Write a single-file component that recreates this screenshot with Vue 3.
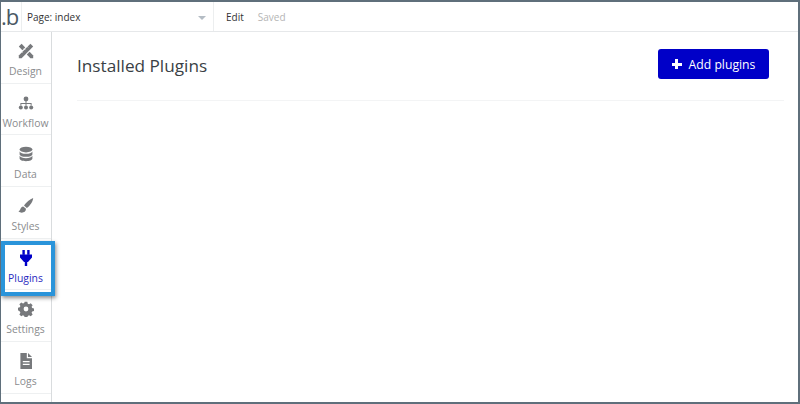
<script setup>
const items = [
  { key: 'design', label: 'Design' },
  { key: 'workflow', label: 'Workflow' },
  { key: 'data', label: 'Data' },
  { key: 'styles', label: 'Styles' },
  { key: 'plugins', label: 'Plugins' },
  { key: 'settings', label: 'Settings' },
  { key: 'logs', label: 'Logs' },
]
</script>

<template>
  <div class="frame">
    <header class="topbar">
      <div class="logo">.b</div>
      <div class="page">
        <span>Page: index</span>
        <i class="caret"></i>
      </div>
      <div class="actions">
        <span class="edit">Edit</span>
        <span class="saved">Saved</span>
      </div>
    </header>
    <div class="body">
      <nav class="side">
        <div v-for="it in items" :key="it.key" class="item" :class="{ active: it.key === 'plugins' }">
          <svg class="ico" viewBox="0 0 20 20" aria-hidden="true">
            <g v-if="it.key === 'design'" fill="currentColor">
              <path d="M1 4.500 4.500 1 9 5.500 5.500 9Z" />
              <path d="M11 14.500 14.500 11 19 15.500V19h-3.500Z" />
              <path d="M1 15.500 15.500 1 19 4.500 4.500 19H1Z" />
              <path d="M4 10.500 5.500 12M7.500 7 9 8.500M11 4 12.500 5.500" stroke="#fff" stroke-width="1" />
            </g>
            <g v-else-if="it.key === 'workflow'" fill="currentColor">
              <circle cx="10" cy="5" r="3" />
              <circle cx="3.500" cy="15.500" r="2.500" />
              <circle cx="10" cy="15.500" r="2.500" />
              <circle cx="16.500" cy="15.500" r="2.500" />
              <path d="M9.400 7h1.200v3h6.400v3h-1.200v-1.800h-5.200V13H9.400v-1.800H4.200V13H3v-3h6.400Z" />
            </g>
            <g v-else-if="it.key === 'data'" fill="currentColor">
              <ellipse cx="10" cy="4.500" rx="8" ry="3.500" />
              <path d="M2 6.800c1 2 4 3 8 3s7-1 8-3v3.400c0 1.900-3.500 3.300-8 3.300s-8-1.400-8-3.300Z" />
              <path d="M2 12.300c1 2 4 3 8 3s7-1 8-3v3.400c0 1.900-3.500 3.300-8 3.300s-8-1.400-8-3.300Z" />
            </g>
            <g v-else-if="it.key === 'styles'" fill="currentColor">
              <path d="M19 0c-4 1.500-9 5.500-11.500 9.500l3.500 3C14.500 10 18.500 5 19 0Z" />
              <path d="M6.500 10.500c-3.500.3-3 4.500-6 6.500 3.500 2.500 9.500 1.500 9.500-3.500Z" />
            </g>
            <g v-else-if="it.key === 'plugins'" fill="currentColor">
              <rect x="5.500" y="0" width="3" height="6" />
              <rect x="11.500" y="0" width="3" height="6" />
              <path d="M2.500 5.500h15v4l-5 5.500h-1V20h-3v-5h-1l-5-5.500Z" />
            </g>
            <g v-else-if="it.key === 'settings'" fill="currentColor">
              <path fill-rule="evenodd" d="M8.300 1h3.400l.5 2.400 1.600.7 2.100-1.300 2.400 2.400-1.300 2.100.7 1.600 2.400.5v3.200l-2.400.5-.7 1.600 1.300 2.100-2.400 2.400-2.100-1.300-1.600.7-.5 2.400H8.300l-.5-2.400-1.600-.7-2.100 1.300-2.400-2.400 1.300-2.100-.7-1.600L0 11.600V8.400l2.300-.5.7-1.600-1.300-2.100 2.400-2.400 2.100 1.300 1.600-.7ZM10 7a3 3 0 1 0 0 6 3 3 0 0 0 0-6Z" />
            </g>
            <g v-else fill="currentColor">
              <path fill-rule="evenodd" d="M3 0h8v6.500h6.500V20H3ZM6 10v1.500h8.500V10Zm0 3.500V15h8.500v-1.500Z" />
              <path d="M12.500 0 17.500 5H12.500Z" />
            </g>
          </svg>
          <span class="lbl">{{ it.label }}</span>
        </div>
        <div class="hl"></div>
      </nav>
      <main class="main">
        <div class="head">
          <h1>Installed Plugins</h1>
          <button class="add"><span class="plus"></span>Add plugins</button>
        </div>
      </main>
    </div>
  </div>
</template>

<style>
html, body { margin: 0; background: #fff; }
</style>

<style scoped>
.frame {
  width: 800px;
  height: 404px;
  box-sizing: border-box;
  border: 2px solid #5f6f7b;
  border-top-width: 2px;
  border-left-width: 1px;
  display: flex;
  flex-direction: column;
  font-family: "Open Sans", sans-serif;
  overflow: hidden;
  background: #fff;
}
.topbar {
  height: 29px;
  flex: none;
  display: flex;
  align-items: stretch;
  border-bottom: 1px solid #e6e8ea;
}
.logo {
  width: 20px;
  flex: none;
  border-right: 1px solid #eceeef;
  font-size: 22px;
  font-weight: 400;
  line-height: 29px;
  color: #4a5864;
  letter-spacing: -1px;
  white-space: nowrap;
  overflow: hidden;
}
.page {
  width: 192px;
  flex: none;
  box-sizing: border-box;
  padding: 0 7px 0 5px;
  border-right: 1px solid #eceeef;
  display: flex;
  align-items: center;
  justify-content: space-between;
  font-size: 10px;
  color: #333;
}
.caret {
  width: 0;
  height: 0;
  border-left: 4px solid transparent;
  border-right: 4px solid transparent;
  border-top: 4px solid #b4bcc4;
  margin-top: 2px;
}
.actions {
  display: flex;
  align-items: center;
  gap: 14px;
  padding-left: 12px;
  font-size: 10px;
}
.edit { color: #333; }
.saved { color: #b5b5b5; }
.body {
  flex: 1;
  display: flex;
  min-height: 0;
}
.side {
  position: relative;
  width: 51px;
  flex: none;
  box-sizing: border-box;
  border-right: 1px solid #d9dcde;
}
.item {
  height: 51.7px;
  box-sizing: border-box;
  border-bottom: 1px solid #eef0f1;
  display: flex;
  flex-direction: column;
  align-items: center;
  padding-top: 11px;
  padding-right: 1px;
  color: #77797c;
}
.item.active { color: #0000c8; }
.ico {
  width: 16px;
  height: 16px;
  flex: none;
}
.lbl {
  margin-top: 5px;
  font-size: 10.4px;
  line-height: 14px;
  color: #8a8c8e;
}
.item.active .lbl { color: #2a2ac0; }
.hl {
  position: absolute;
  left: 0;
  top: 209px;
  width: 54px;
  height: 55px;
  box-sizing: border-box;
  border: 4px solid #2a94da;
  box-shadow: 1px 2px 4px rgba(0, 0, 0, 0.45);
}
.main {
  flex: 1;
  padding: 17px 14px 0 25px;
  min-width: 0;
}
.head {
  height: 51px;
  padding-right: 15px;
  border-bottom: 1px solid #f3f4f5;
  display: flex;
  justify-content: space-between;
  align-items: flex-start;
}
h1 {
  margin: 0;
  padding-top: 4px;
  font-size: 17.2px;
  line-height: 26px;
  font-weight: 400;
  color: #3a3f45;
}
.add {
  width: 111px;
  height: 30px;
  border: 0;
  border-radius: 3px;
  background: #0000c8;
  color: #fff;
  font-family: inherit;
  font-size: 12.2px;
  font-weight: 500;
  display: flex;
  align-items: center;
  justify-content: center;
  padding: 0;
  gap: 7px;
}
.plus {
  width: 10px;
  height: 10px;
  background:
    linear-gradient(#fff, #fff) center / 10px 3px no-repeat,
    linear-gradient(#fff, #fff) center / 3px 10px no-repeat;
}
</style>
